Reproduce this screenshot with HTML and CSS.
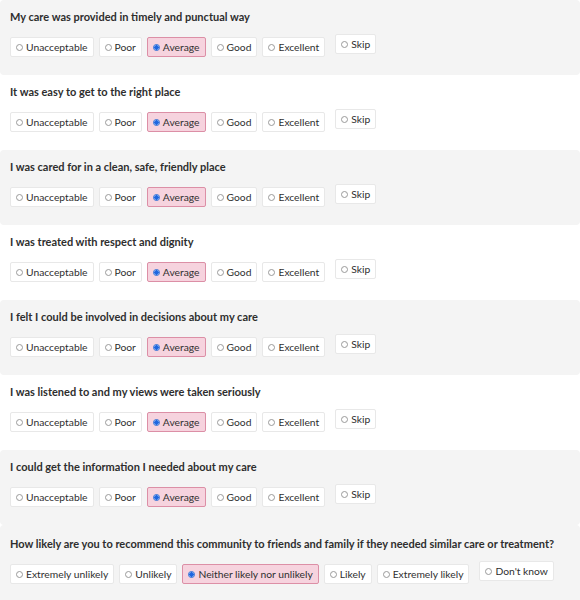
FILE: index.html
```html
<!DOCTYPE html>
<html>
<head>
<meta charset="utf-8">
<link rel="stylesheet" href="styles.css">
</head>
<body>
<div class="survey">
  <section class="q shade">
    <div class="title">My care was provided in timely and punctual way</div>
    <div class="row">
      <span class="opt"><i class="radio"></i>Unacceptable</span>
      <span class="opt"><i class="radio"></i>Poor</span>
      <span class="opt sel"><i class="radio on"></i>Average</span>
      <span class="opt"><i class="radio"></i>Good</span>
      <span class="opt"><i class="radio"></i>Excellent</span>
      <span class="opt skip"><i class="radio"></i>Skip</span>
    </div>
  </section>
  <section class="q">
    <div class="title">It was easy to get to the right place</div>
    <div class="row">
      <span class="opt"><i class="radio"></i>Unacceptable</span>
      <span class="opt"><i class="radio"></i>Poor</span>
      <span class="opt sel"><i class="radio on"></i>Average</span>
      <span class="opt"><i class="radio"></i>Good</span>
      <span class="opt"><i class="radio"></i>Excellent</span>
      <span class="opt skip"><i class="radio"></i>Skip</span>
    </div>
  </section>
  <section class="q shade">
    <div class="title">I was cared for in a clean, safe, friendly place</div>
    <div class="row">
      <span class="opt"><i class="radio"></i>Unacceptable</span>
      <span class="opt"><i class="radio"></i>Poor</span>
      <span class="opt sel"><i class="radio on"></i>Average</span>
      <span class="opt"><i class="radio"></i>Good</span>
      <span class="opt"><i class="radio"></i>Excellent</span>
      <span class="opt skip"><i class="radio"></i>Skip</span>
    </div>
  </section>
  <section class="q">
    <div class="title">I was treated with respect and dignity</div>
    <div class="row">
      <span class="opt"><i class="radio"></i>Unacceptable</span>
      <span class="opt"><i class="radio"></i>Poor</span>
      <span class="opt sel"><i class="radio on"></i>Average</span>
      <span class="opt"><i class="radio"></i>Good</span>
      <span class="opt"><i class="radio"></i>Excellent</span>
      <span class="opt skip"><i class="radio"></i>Skip</span>
    </div>
  </section>
  <section class="q shade">
    <div class="title">I felt I could be involved in decisions about my care</div>
    <div class="row">
      <span class="opt"><i class="radio"></i>Unacceptable</span>
      <span class="opt"><i class="radio"></i>Poor</span>
      <span class="opt sel"><i class="radio on"></i>Average</span>
      <span class="opt"><i class="radio"></i>Good</span>
      <span class="opt"><i class="radio"></i>Excellent</span>
      <span class="opt skip"><i class="radio"></i>Skip</span>
    </div>
  </section>
  <section class="q">
    <div class="title">I was listened to and my views were taken seriously</div>
    <div class="row">
      <span class="opt"><i class="radio"></i>Unacceptable</span>
      <span class="opt"><i class="radio"></i>Poor</span>
      <span class="opt sel"><i class="radio on"></i>Average</span>
      <span class="opt"><i class="radio"></i>Good</span>
      <span class="opt"><i class="radio"></i>Excellent</span>
      <span class="opt skip"><i class="radio"></i>Skip</span>
    </div>
  </section>
  <section class="q shade">
    <div class="title">I could get the information I needed about my care</div>
    <div class="row">
      <span class="opt"><i class="radio"></i>Unacceptable</span>
      <span class="opt"><i class="radio"></i>Poor</span>
      <span class="opt sel"><i class="radio on"></i>Average</span>
      <span class="opt"><i class="radio"></i>Good</span>
      <span class="opt"><i class="radio"></i>Excellent</span>
      <span class="opt skip"><i class="radio"></i>Skip</span>
    </div>
  </section>
  <section class="q shade last">
    <div class="title">How likely are you to recommend this community to friends and family if they needed similar care or treatment?</div>
    <div class="row">
      <span class="opt"><i class="radio"></i>Extremely unlikely</span>
      <span class="opt"><i class="radio"></i>Unlikely</span>
      <span class="opt sel"><i class="radio on"></i>Neither likely nor unlikely</span>
      <span class="opt"><i class="radio"></i>Likely</span>
      <span class="opt"><i class="radio"></i>Extremely likely</span>
      <span class="opt skip"><i class="radio"></i>Don't know</span>
    </div>
  </section>
</div>
</body>
</html>
```

FILE: styles.css
```css
html, body {
  margin: 0;
  padding: 0;
  background: #ffffff;
}
body {
  font-family: Lato, "Open Sans", "Liberation Sans", sans-serif;
  color: #333333;
  font-size: 11px;
}
.survey {
  width: 580px;
}
.q {
  height: 75px;
  box-sizing: border-box;
  padding: 10px 10px 0 10px;
  border-radius: 4px;
}
.q.shade {
  background: #f4f4f4;
}
.q.last {
  padding-top: 12px;
  height: 80px;
}
.title {
  font-weight: bold;
  font-size: 11px;
  line-height: 14px;
  color: #2e2e2e;
  white-space: nowrap;
}
.row {
  display: flex;
  align-items: flex-start;
  gap: 5px;
  margin-top: 13px;
}
.opt {
  display: inline-flex;
  align-items: center;
  flex: none;
  white-space: nowrap;
  height: 20px;
  box-sizing: border-box;
  padding: 0 5px 0 5px;
  background: #ffffff;
  border: 1px solid #e8e8e8;
  border-radius: 2px;
  font-size: 10.3px;
  color: #2f2f2f;
}
.opt.sel {
  background: #f6d3de;
  border-color: #dc8fa6;
}
.opt.skip {
  margin-left: 5px;
  margin-top: -3px;
}
.radio {
  display: inline-block;
  flex: none;
  width: 7px;
  height: 7px;
  box-sizing: border-box;
  border: 1px solid #9a9a9a;
  border-radius: 50%;
  margin-right: 3px;
  background: #ffffff;
}
.radio.on {
  border-color: #2b6fd8;
  background: radial-gradient(circle, #1e66e0 0 2px, #ffffff 2.5px);
}
```
